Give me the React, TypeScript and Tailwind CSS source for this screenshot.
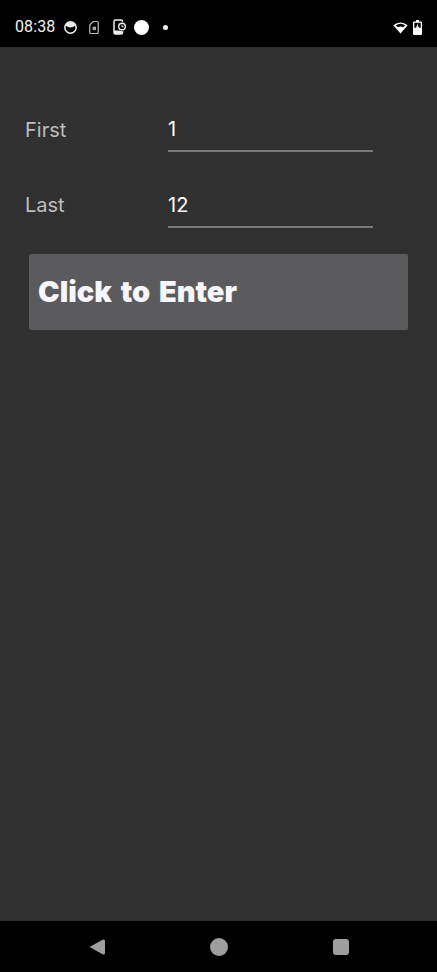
export default function App() {
  return (
    <div className="flex h-[972px] w-[437px] flex-col overflow-hidden bg-[#303030] font-['Inter',sans-serif]">
      <header className="flex h-[47px] shrink-0 items-center justify-between bg-black pl-[15px] pr-[15px] pt-[7px]">
        <div className="flex items-center">
          <span className="w-[40px] font-['Roboto',sans-serif] text-[16px] leading-none tracking-[0.1px] text-[#f2f2f2]">08:38</span>
          <svg className="ml-[8px]" width="15" height="15" viewBox="0 0 15 15">
            <circle cx="7.500" cy="7.500" r="5.700" fill="#000" stroke="#eee" strokeWidth="1.500" />
            <path d="M2.500 5.500 Q7.500 9.500 12.500 5.500 L11 3 L7.500 2 L4 3 Z" fill="#eee" />
          </svg>
          <svg className="ml-[10px]" width="12" height="15" viewBox="0 0 12 15">
            <path d="M5 1.500h4.200a1 1 0 0 1 1 1v10a1 1 0 0 1-1 1H2.800a1 1 0 0 1-1-1V5z" fill="none" stroke="#bdbdbd" strokeWidth="1.200" />
            <rect x="4.600" y="6.700" width="3.400" height="3.400" fill="#a8a8a8" />
          </svg>
          <svg className="ml-[13px]" width="14" height="16" viewBox="0 0 14 16">
            <rect x="1" y="1" width="8.500" height="14" rx="1.500" fill="none" stroke="#eee" strokeWidth="1.500" />
            <rect x="1" y="11.500" width="8.500" height="3.500" fill="#eee" />
            <circle cx="9" cy="7.500" r="4.700" fill="#000" />
            <circle cx="9" cy="7.500" r="3.300" fill="none" stroke="#eee" strokeWidth="1.400" />
            <path d="M9 5.800v2h1.500" fill="none" stroke="#eee" strokeWidth="1" />
          </svg>
          <div className="ml-[7px] h-[15px] w-[15px] rounded-full bg-white" />
          <div className="ml-[14px] h-[5px] w-[5px] rounded-full bg-[#eee]" />
        </div>
        <div className="flex items-center gap-[5px]">
          <svg width="15" height="13" viewBox="0 0 15 13">
            <path d="M7.500 12.500 0.300 4.200 Q7.500 -1.200 14.700 4.200Z" fill="#fff" />
            <path d="M2.700 4.400 Q7.500 1 12.300 4.400 L10 6.200 Q7.500 5 5 6.200Z" fill="#000" />
          </svg>
          <svg width="9" height="15" viewBox="0 0 9 15">
            <path d="M3 0h3v1.500h2a1 1 0 0 1 1 1V14a1 1 0 0 1-1 1H1a1 1 0 0 1-1-1V2.500a1 1 0 0 1 1-1h2z" fill="#fff" />
            <rect x="1.300" y="2.800" width="6.400" height="5" fill="#000" />
            <path d="M5.300 3 2.800 7.800h1.600L3.700 12 6.500 6.700H4.800z" fill="#fff" />
          </svg>
        </div>
      </header>
      <main className="flex-1 pl-[25px] pt-[45px]">
        <div className="flex h-[76px] items-start">
          <label className="w-[143px] pt-[27px] text-[20px] leading-[23px] text-[#bdbdbd]">First</label>
          <div className="h-[60px] w-[205px] border-b-2 border-[#7a7a7a] pt-[26px] text-[20px] leading-[23px] text-white">1</div>
        </div>
        <div className="flex h-[76px] items-start">
          <label className="w-[143px] pt-[26px] text-[20px] leading-[23px] text-[#bdbdbd]">Last</label>
          <div className="h-[60px] w-[205px] border-b-2 border-[#7a7a7a] pt-[26px] text-[20px] leading-[23px] text-white">12</div>
        </div>
        <button className="ml-[4px] mt-[10px] flex h-[76px] w-[379px] items-center rounded-[2px] bg-[#5b5b5d] pl-[9px] text-[29px] font-black [word-spacing:3px] text-[#f6f6fc]">Click to Enter</button>
      </main>
      <nav className="flex h-[51px] shrink-0 items-center bg-black">
        <svg className="ml-[88px]" width="18" height="18" viewBox="0 0 18 18">
          <path d="M1.500 9 15 1.500Q17 1 17 3V15Q17 17 15 16.500Z" fill="#9e9e9e" />
        </svg>
        <div className="ml-[104px] h-[18px] w-[18px] rounded-full bg-[#9e9e9e]" />
        <div className="ml-[105px] h-[16px] w-[16px] rounded-[3px] bg-[#9e9e9e]" />
      </nav>
    </div>
  );
}
